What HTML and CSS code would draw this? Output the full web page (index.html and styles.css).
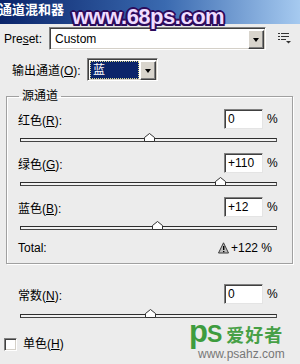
FILE: index.html
```html
<!DOCTYPE html>
<html lang="zh">
<head>
<meta charset="UTF-8">
<title>通道混和器</title>
<link rel="stylesheet" href="styles.css">
</head>
<body>
<div class="titlebar"><span class="title">通道混和器</span></div>
<div class="mark68">www.68ps.com</div>

<div class="row preset-row">
  <span class="lbl preset-lbl">Pre<u>s</u>et:</span>
  <div class="combo combo-preset"><span class="combo-text">Custom</span><span class="combo-btn"></span></div>
  <svg class="menu-icon" width="13" height="12" viewBox="0 0 13 12">
    <rect x="0" y="1" width="2" height="1" fill="#333"/><rect x="3" y="1" width="8" height="1" fill="#333"/>
    <rect x="0" y="4" width="2" height="1" fill="#333"/><rect x="3" y="4" width="8" height="1" fill="#333"/>
    <rect x="0" y="7" width="2" height="1" fill="#333"/><rect x="3" y="7" width="5" height="1" fill="#333"/>
    <polygon points="8,9 13,9 10.5,11.5" fill="#333"/>
  </svg>
</div>

<div class="row out-row">
  <span class="lbl out-lbl">输出通道(<u>O</u>):</span>
  <div class="combo combo-out"><span class="combo-text sel">蓝</span><span class="combo-btn"></span></div>
</div>

<fieldset class="group">
  <legend>源通道</legend>
  <div class="channel">
    <div class="field"><span class="name">红色(<u>R</u>):</span><span class="num">0</span><span class="pct">%</span></div>
    <div class="track"><svg class="thumb" style="left:123px" width="11" height="9" viewBox="0 0 11 9"><polygon points="0.5,8.5 0.5,4.5 5.5,0.5 10.5,4.5 10.5,8.5" fill="#fff" stroke="#333"/></svg></div>
  </div>
  <div class="channel">
    <div class="field"><span class="name">绿色(<u>G</u>):</span><span class="num">+110</span><span class="pct">%</span></div>
    <div class="track"><svg class="thumb" style="left:194px" width="11" height="9" viewBox="0 0 11 9"><polygon points="0.5,8.5 0.5,4.5 5.5,0.5 10.5,4.5 10.5,8.5" fill="#fff" stroke="#333"/></svg></div>
  </div>
  <div class="channel">
    <div class="field"><span class="name">蓝色(<u>B</u>):</span><span class="num">+12</span><span class="pct">%</span></div>
    <div class="track"><svg class="thumb" style="left:131px" width="11" height="9" viewBox="0 0 11 9"><polygon points="0.5,8.5 0.5,4.5 5.5,0.5 10.5,4.5 10.5,8.5" fill="#fff" stroke="#333"/></svg></div>
  </div>
  <div class="total">
    <span>Total:</span>
    <svg class="warn" width="11" height="12" viewBox="0 0 11 12">
      <polygon points="5.5,0.8 10.5,11 0.5,11" fill="#bdbdbd" stroke="#3a3a3a"/>
      <rect x="5" y="4" width="1.4" height="4" fill="#000"/><rect x="5" y="9" width="1.4" height="1.2" fill="#000"/>
    </svg>
    <span class="total-val">+122 %</span>
  </div>
</fieldset>

<div class="channel const">
  <div class="field"><span class="name">常数(<u>N</u>):</span><span class="num">0</span><span class="pct">%</span></div>
  <div class="track"><svg class="thumb" style="left:124px" width="11" height="9" viewBox="0 0 11 9"><polygon points="0.5,8.5 0.5,4.5 5.5,0.5 10.5,4.5 10.5,8.5" fill="#fff" stroke="#333"/></svg></div>
</div>

<div class="check-row"><span class="box"></span><span class="check-lbl">单色(<u>H</u>)</span></div>

<div class="mark-ps">
  <div class="ps-top"><span class="ps-p">p</span><span class="ps-s">S</span><span class="ps-cn">爱好者</span></div>
  <div class="ps-url">www.psahz.com</div>
</div>
</body>
</html>
```

FILE: styles.css
```css
* { box-sizing: border-box; }
body {
  margin: 0; width: 300px; height: 364px; overflow: hidden; position: relative;
  background: #ececec; color: #000;
  font-family: "Liberation Sans", "Noto Sans CJK SC", sans-serif; font-size: 12px;
}
u { text-decoration: underline; text-underline-offset: 1px; }

/* title bar + watermark */
.titlebar { height: 24px; background: linear-gradient(to right, #0a246a, #3a6ab0 55%, #a6caf0); }
.title { display: block; color: #fff; font-weight: bold; font-size: 13px; line-height: 20px; margin-left: -1px; }
.mark68 {
  position: absolute; left: 72px; top: 6px;
  font-family: "Liberation Sans", sans-serif; font-weight: bold; font-size: 22px; line-height: 22px;
  letter-spacing: -0.5px; color: #efdcff;
  text-shadow: 2px 0 #2c0c5c, -2px 0 #2c0c5c, 0 2px #2c0c5c, 0 -2px #2c0c5c,
    1.5px 1.5px #2c0c5c, -1.5px 1.5px #2c0c5c, 1.5px -1.5px #2c0c5c, -1.5px -1.5px #2c0c5c;
}

/* top rows */
.row { display: flex; align-items: center; height: 23px; }
.preset-row { margin-top: 3px; padding-left: 4px; }
.preset-lbl { width: 45px; }
.out-row { margin-top: 8px; padding-left: 12px; }
.out-lbl { width: 75px; }

.combo {
  display: flex; height: 23px; background: #fff; padding: 1px;
  border: 1px solid; border-color: #808080 #fff #fff #808080;
  box-shadow: inset 1px 1px #404040, inset -1px -1px #d4d0c8;
}
.combo-preset { width: 217px; }
.combo-out { width: 71px; }
.combo-text { flex: 1; line-height: 19px; padding: 0 3px; margin: 1px 0 0 1px; }
.combo-btn {
  width: 16px; height: 19px; margin-top: 1px; background: #d8d4cc; display: flex; align-items: center; justify-content: center;
  border: 1px solid; border-color: #fff #404040 #404040 #fff; box-shadow: inset -1px -1px #808080;
}
.combo-btn::after { content: ""; border-top: 4px solid #000; border-left: 3.5px solid transparent; border-right: 3.5px solid transparent; }
.sel { background: #0a246a; color: #fff; outline: 1px dotted #d8d890; outline-offset: -1px; margin-right: 1px; }
.menu-icon { margin-left: 12px; margin-top: -2px; }

/* group box */
.group {
  margin: 8px 7px 0 6px; padding: 6px 15px 8px 11px;
  border: 1px solid #a0a0a0; box-shadow: inset 1px 1px #fff, 1px 1px #fff;
}
.group legend { padding: 0 3px; margin-left: 1px; line-height: 14px; font-size: 12px; }

.channel { margin-bottom: 11px; }
.field { display: flex; align-items: center; height: 20px; }
.name { flex: 1; }
.num {
  width: 39px; height: 20px; background: #fff; line-height: 18px; padding-left: 3px;
  border: 1px solid; border-color: #808080 #e4e4e4 #e4e4e4 #808080; box-shadow: inset 1px 1px #404040;
}
.pct { width: 10px; margin-left: 4px; }
.track {
  position: relative; height: 4px; margin: 9px 0 0 2px;
  background: #f2f2f2; border: 1px solid #2e2e2e; border-right-color: #555; border-bottom-color: #444;
}
.thumb { position: absolute; bottom: -1px; }

.total { display: flex; align-items: center; height: 14px; margin-top: 8px; }
.total span:first-child { flex: 1; }
.warn { margin-right: 2px; }
.total-val { margin-right: 5px; }

/* outside group */
.const { margin: 20px 0 0; padding: 0 23px 0 18px; }
.const .track { margin-top: 10px; }
.check-row { display: flex; align-items: center; height: 13px; margin-top: 20px; padding-left: 4px; }
.box {
  width: 13px; height: 13px; background: #fff;
  border: 1px solid; border-color: #808080 #fff #fff #808080; box-shadow: inset 1px 1px #404040, inset -1px -1px #d4d0c8;
}
.check-lbl { margin-left: 6px; line-height: 13px; }

/* bottom-right watermark */
.mark-ps { position: absolute; left: 189px; top: 316px; }
.ps-top { display: flex; align-items: baseline; line-height: 1; }
.ps-p { font: bold 31px/1 "Liberation Sans", sans-serif; color: #3e9c3e; }
.ps-s { font: bold 23px/1 "Liberation Sans", sans-serif; color: #3e9c3e; margin-left: -1px; }
.ps-cn { font-size: 18px; line-height: 1; color: #46a046; margin-left: 4px; letter-spacing: 1px; font-weight: bold; }
.ps-url { font-size: 12px; color: #777; margin: 2px 0 0 9px; line-height: 11px; }
```
